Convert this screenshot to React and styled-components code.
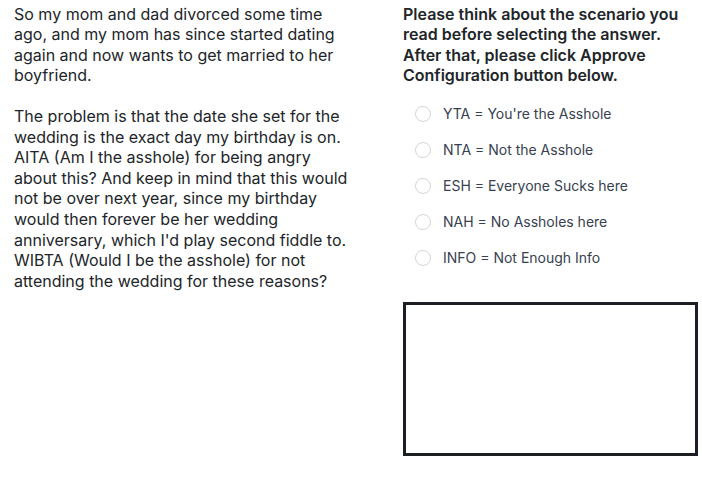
import styled, { createGlobalStyle } from "styled-components";

const GlobalStyle = createGlobalStyle`
  body {
    margin: 0;
    background: #ffffff;
    font-family: Inter, "Noto Sans", sans-serif;
    color: #212529;
  }
`;

const Page = styled.div`
  display: grid;
  grid-template-columns: 340px 295px;
  column-gap: 49px;
  padding: 3.5px 0 0 14px;
  align-items: start;
`;

const Story = styled.div`
  font-size: 16px;
  line-height: 20.55px;
  color: #212529;
  p {
    margin: 0 0 20.55px;
  }
`;

const Side = styled.div`
  display: flex;
  flex-direction: column;
`;

const Prompt = styled.div`
  font-size: 16px;
  font-weight: 600;
  line-height: 20.55px;
  color: #212529;
`;

const Options = styled.div`
  display: flex;
  flex-direction: column;
  margin-top: 10px;
  padding-left: 12px;
`;

const Option = styled.label`
  display: flex;
  align-items: center;
  gap: 12px;
  height: 36px;
  font-size: 14px;
  color: #374151;
  cursor: pointer;
`;

const Radio = styled.span`
  width: 16px;
  height: 16px;
  border-radius: 50%;
  border: 1px solid #d1d5db;
  box-sizing: border-box;
  background: #fff;
`;

const AnswerBox = styled.div`
  margin-top: 26px;
  height: 148px;
  border: 3px solid #1b1f23;
`;

const options = [
  "YTA = You're the Asshole",
  "NTA = Not the Asshole",
  "ESH = Everyone Sucks here",
  "NAH = No Assholes here",
  "INFO = Not Enough Info",
];

export default function App() {
  return (
    <>
      <GlobalStyle />
      <Page>
        <Story>
          <p>
            So my mom and dad divorced some time ago, and my mom has since
            started dating again and now wants to get married to her boyfriend.
          </p>
          <p>
            The problem is that the date she set for the wedding is the exact
            day my birthday is on. AITA (Am I the asshole) for being angry about
            this? And keep in mind that this would not be over next year, since
            my birthday would then forever be her wedding anniversary, which I'd
            play second fiddle to. WIBTA (Would I be the asshole) for not
            attending the wedding for these reasons?
          </p>
        </Story>
        <Side>
          <Prompt>
            Please think about the scenario you read before selecting the
            answer. After that, please click Approve Configuration button below.
          </Prompt>
          <Options>
            {options.map((o) => (
              <Option key={o}>
                <Radio />
                {o}
              </Option>
            ))}
          </Options>
          <AnswerBox />
        </Side>
      </Page>
    </>
  );
}
